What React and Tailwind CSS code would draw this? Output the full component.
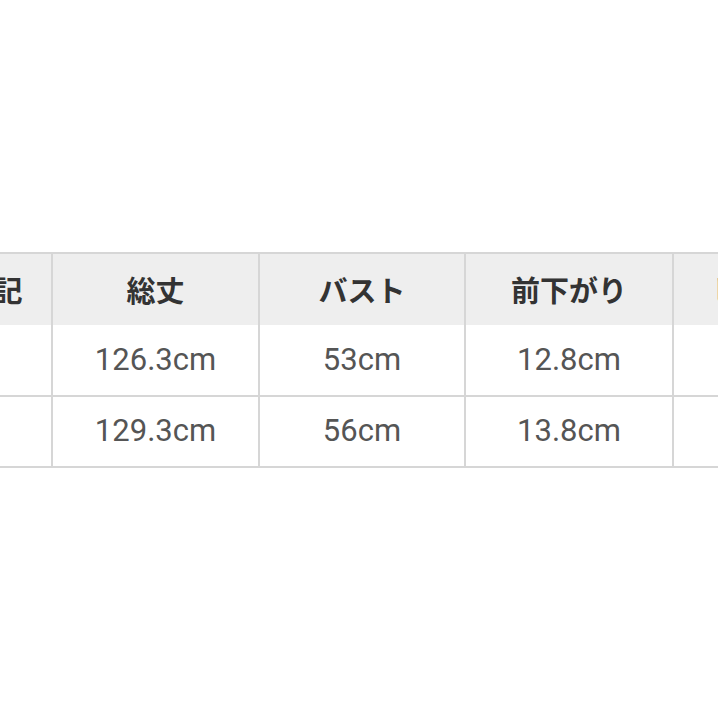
import React from "react";

const columns = [
  { label: "サイズ表記", width: "w-[203px]", values: ["", ""] },
  { label: "総丈", width: "w-[207px]", values: ["126.3cm", "129.3cm"] },
  { label: "バスト", width: "w-[206px]", values: ["53cm", "56cm"] },
  { label: "前下がり", width: "w-[208px]", values: ["12.8cm", "13.8cm"] },
  { label: "ヒップ", width: "w-[165px]", values: ["", ""] },
];

function SizeTable() {
  return (
    <table className="w-[989px] border-collapse table-fixed ml-[-152px]">
      <thead>
        <tr className="bg-[#eeeeee]">
          {columns.map((col, i) => (
            <th
              key={i}
              className={`${col.width} h-[72px] p-0 border-t-2 border-x-2 border-[#d6d6d6] text-[29px] font-bold text-[#333333] whitespace-nowrap font-['Noto_Sans_CJK_JP',sans-serif]`}
            >
              {col.label}
            </th>
          ))}
        </tr>
      </thead>
      <tbody>
        {[0, 1].map((row) => (
          <tr key={row} className="bg-white">
            {columns.map((col, i) => (
              <td
                key={i}
                className="h-[71px] p-0 border-x-2 border-b-2 border-[#d6d6d6] text-center text-[31px] text-[#555555] font-['Roboto',sans-serif]"
              >
                {col.values[row]}
              </td>
            ))}
          </tr>
        ))}
      </tbody>
    </table>
  );
}

export default function App() {
  return (
    <div className="w-[718px] h-[718px] bg-white overflow-hidden pt-[252px]">
      <SizeTable />
    </div>
  );
}
